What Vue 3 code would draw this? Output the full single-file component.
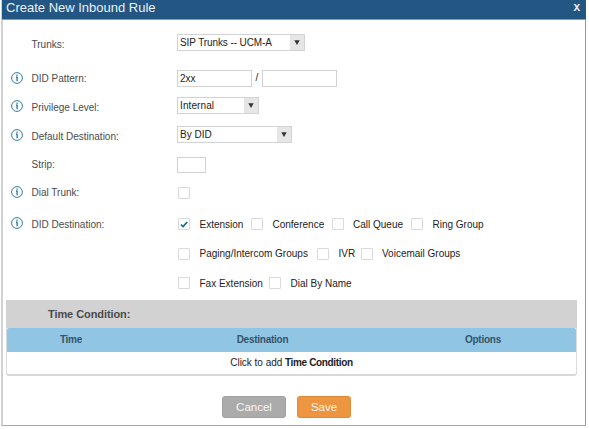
<script setup>
import { ref } from 'vue'

const options = ref([
  [
    { label: 'Extension', width: 73, checked: true },
    { label: 'Conference', width: 80.5 },
    { label: 'Call Queue', width: 79.5 },
    { label: 'Ring Group', width: 80 },
  ],
  [
    { label: 'Paging/Intercom Groups', width: 139 },
    { label: 'IVR', width: 43.5 },
    { label: 'Voicemail Groups', width: 110 },
  ],
  [
    { label: 'Fax Extension', width: 91 },
    { label: 'Dial By Name', width: 90 },
  ],
])

const fields = [
  { key: 'trunks', label: 'Trunks:', info: false },
  { key: 'pattern', label: 'DID Pattern:', info: true },
  { key: 'privilege', label: 'Privilege Level:', info: true },
  { key: 'default', label: 'Default Destination:', info: true },
  { key: 'strip', label: 'Strip:', info: false },
  { key: 'dial', label: 'Dial Trunk:', info: true },
  { key: 'did', label: 'DID Destination:', info: true },
]

const selects = {
  trunks: 'SIP Trunks -- UCM-A',
  privilege: 'Internal',
  default: 'By DID',
}
</script>

<template>
  <div class="dialog">
    <header class="title-bar">
      <span>Create New Inbound Rule</span>
      <span class="close">X</span>
    </header>

    <div class="form">
      <div v-for="f in fields" :key="f.key" class="row" :class="'row-' + f.key">
        <div class="info">
          <svg v-if="f.info" width="12" height="12" viewBox="0 0 12 12">
            <circle cx="6" cy="6" r="5.4" fill="#fff" stroke="#2f7fa3" stroke-width="1" />
            <rect x="5.4" y="2.6" width="1.3" height="1.2" fill="#17688f" />
            <path d="M5 5.2H6.1V9.2" fill="none" stroke="#17688f" stroke-width="1.2" />
          </svg>
        </div>
        <div class="label">{{ f.label }}</div>
        <div class="control">
          <div v-if="selects[f.key]" class="select">
            <span class="value">{{ selects[f.key] }}</span>
            <span class="arrow">
              <svg width="6" height="5" viewBox="0 0 6 5"><path d="M0.3 0.3H5.7L3 5Z" fill="#333" /></svg>
            </span>
          </div>
          <template v-else-if="f.key === 'pattern'">
            <div class="input">2xx</div>
            <span class="slash">/</span>
            <div class="input"></div>
          </template>
          <div v-else-if="f.key === 'strip'" class="input short"></div>
          <span v-else-if="f.key === 'dial'" class="box"></span>
          <div v-else class="options">
            <div v-for="(line, i) in options" :key="i" class="line">
              <div v-for="o in line" :key="o.label" class="option" :style="{ width: o.width + 'px' }" @click="o.checked = !o.checked">
                <span class="box">
                  <svg v-if="o.checked" width="8" height="7" viewBox="0 0 8 7">
                    <path d="M0.9 3.5L3.1 5.6L7.2 1" fill="none" stroke="#17688f" stroke-width="1.7" />
                  </svg>
                </span>
                <span>{{ o.label }}</span>
              </div>
            </div>
          </div>
        </div>
      </div>
    </div>

    <section class="conditions">
      <div class="section-title">Time Condition:</div>
      <div class="table">
        <div class="head">
          <span>Time</span>
          <span>Destination</span>
          <span>Options</span>
        </div>
        <div class="empty">Click to add <b>Time Condition</b></div>
      </div>
    </section>

    <footer class="actions">
      <div class="btn cancel">Cancel</div>
      <div class="btn save">Save</div>
    </footer>
  </div>
</template>

<style>
body {
  background: #fff;
}
</style>

<style scoped>
.dialog {
  box-sizing: border-box;
  width: 585px;
  height: 426px;
  margin-left: 1px;
  border-left: 2px solid #cfd1d3;
  border-right: 1px solid #96999c;
  border-bottom: 1px solid #a5a7a9;
  font-family: "Liberation Sans", Arial, sans-serif;
  font-size: 10px;
  color: #333;
  white-space: nowrap;
}
.title-bar {
  box-sizing: border-box;
  display: flex;
  justify-content: space-between;
  height: 20px;
  padding: 0 6px 0 4px;
  margin-left: -1px;
  margin-right: -1px;
  background: #235682;
  border-bottom: 1px solid #7f9db7;
  color: #e9f2f9;
  font-size: 13px;
  line-height: 15px;
}
.close {
  font-family: "Liberation Mono", monospace;
  font-size: 11px;
  font-weight: bold;
  line-height: 17px;
}
.form {
  height: 280px;
  padding-left: 8px;
}
.row {
  display: flex;
  align-items: flex-start;
}
.info {
  width: 12px;
  padding-top: 3px;
  height: 12px;
}
.info svg {
  display: block;
}
.label {
  width: 154px;
  box-sizing: border-box;
  padding-left: 8.5px;
  line-height: 18px;
  color: #4a4a4a;
}
.control {
  display: flex;
  color: #222;
}
.row-trunks { padding-top: 14px; height: 36px; }
.row-pattern { height: 27px; }
.row-privilege { height: 29px; }
.row-default { height: 31px; }
.row-strip { height: 28px; }
.row-dial { height: 31px; }
.row-trunks .label { padding-top: 2px; }
.row-pattern .info { padding-top: 2px; }
.row-privilege .label { padding-top: 2px; }
.row-default .label { padding-top: 2px; }
.row-strip .label { margin-top: -1px; }
.row-dial .info { padding-top: 1px; }
.row-dial .label { margin-top: -1px; }
.row-did .info { padding-top: 1px; }
.select {
  display: flex;
  box-sizing: border-box;
  height: 17px;
  border: 1px solid #d3d3d3;
  background: #fff;
}
.row-trunks .select { width: 128px; letter-spacing: -0.1px; }
.row-privilege .select { width: 82px; letter-spacing: 0.1px; }
.row-default .select { width: 115px; }
.value {
  flex: 1;
  padding-left: 2px;
  line-height: 15px;
}
.arrow {
  display: flex;
  align-items: center;
  justify-content: center;
  width: 14px;
  background: #e6e6e6;
}
.input {
  box-sizing: border-box;
  width: 75px;
  height: 17px;
  padding-left: 2px;
  border: 1px solid #d3d3d3;
  line-height: 15px;
}
.input.short {
  width: 29px;
  height: 16px;
}
.slash {
  width: 10px;
  text-align: center;
  line-height: 15px;
}
.box {
  display: flex;
  align-items: center;
  justify-content: center;
  box-sizing: border-box;
  flex: none;
  width: 12px;
  height: 12px;
  border: 1px solid #dadada;
  border-radius: 1px;
  background: #fff;
}
.row-dial .box { margin: 2px 0 0 1px; }
.options {
  display: flex;
  flex-direction: column;
  gap: 13.5px;
  padding-left: 1px;
}
.line {
  display: flex;
  height: 16px;
}
.option {
  display: flex;
  align-items: center;
  gap: 9.5px;
}
.conditions {
  width: 571px;
  margin-left: 3px;
}
.section-title {
  height: 28px;
  padding-left: 42px;
  background: #d2d2d2;
  color: #4a4a4a;
  font-size: 11px;
  letter-spacing: -0.08px;
  font-weight: bold;
  line-height: 28px;
}
.table {
  box-sizing: border-box;
  height: 48px;
  border: 1px solid #dcdcdc;
  border-top: 0;
  border-bottom: 2px solid #d8d8d8;
  border-radius: 0 0 3px 3px;
}
.head {
  display: grid;
  grid-template-columns: 128px 255px 1fr;
  height: 24px;
  border-radius: 2px 2px 0 0;
  background: #90c6e4;
  color: #34536a;
  font-size: 10px;
  letter-spacing: -0.25px;
  font-weight: bold;
  line-height: 23px;
  text-align: center;
}
.empty {
  color: #222;
  font-size: 10px;
  letter-spacing: -0.02px;
  line-height: 22px;
  text-align: center;
}
.empty b {
  letter-spacing: -0.35px;
}
.actions {
  display: flex;
  gap: 11px;
  padding: 20px 0 0 219px;
}
.btn {
  box-sizing: border-box;
  height: 22px;
  border-radius: 3px;
  color: #f6f6f6;
  font-size: 11.5px;
  line-height: 21px;
  text-align: center;
}
.cancel {
  width: 64px;
  background: #ababab;
  border: 1px solid #a0a0a0;
}
.save {
  width: 54px;
  background: #ed9540;
  border: 1px solid #dd8a3a;
}
</style>
